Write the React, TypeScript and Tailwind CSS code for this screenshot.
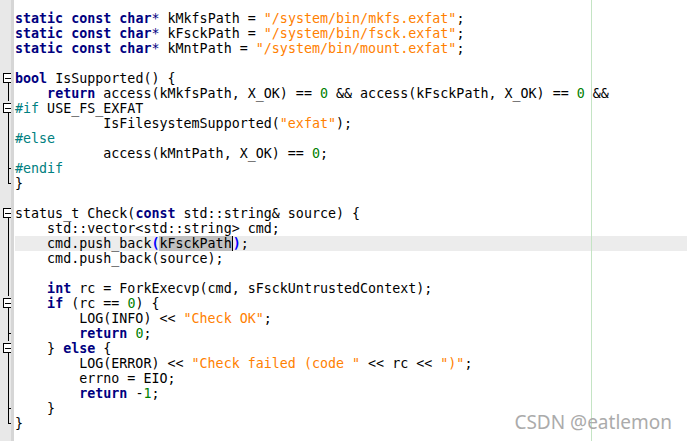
type Tok = [string, string?];
type Fold = "none" | "box" | "line" | "tick" | "end";

const K = "font-bold text-[#000080]";
const S = "text-[#ff8000]";
const N = "text-[#008000]";
const P = "text-[#008080]";
const O = "text-[#000080]";

const lines: { fold: Fold; toks: Tok[]; current?: boolean }[] = [
  { fold: "none", toks: [["static", K], [" "], ["const", K], [" "], ["char", K], ["*", O], [" kMkfsPath = "], ['"/system/bin/mkfs.exfat"', S], [";"]] },
  { fold: "none", toks: [["static", K], [" "], ["const", K], [" "], ["char", K], ["*", O], [" kFsckPath = "], ['"/system/bin/fsck.exfat"', S], [";"]] },
  { fold: "none", toks: [["static", K], [" "], ["const", K], [" "], ["char", K], ["*", O], [" kMntPath = "], ['"/system/bin/mount.exfat"', S], [";"]] },
  { fold: "none", toks: [] },
  { fold: "box", toks: [["bool", K], [" IsSupported() {"]] },
  { fold: "line", toks: [["    "], ["return", K], [" access(kMkfsPath, X_OK) == "], ["0", N], [" && access(kFsckPath, X_OK) == "], ["0", N], [" &&"]] },
  { fold: "box", toks: [["#if", P], [" USE_FS_EXFAT"]] },
  { fold: "line", toks: [["           IsFilesystemSupported("], ['"exfat"', S], [");"]] },
  { fold: "line", toks: [["#else", P]] },
  { fold: "line", toks: [["           access(kMntPath, X_OK) == "], ["0", N], [";"]] },
  { fold: "tick", toks: [["#endif", P]] },
  { fold: "end", toks: [["}"]] },
  { fold: "none", toks: [] },
  { fold: "box", toks: [["status_t Check("], ["const", K], [" std::string& source) {"]] },
  { fold: "line", toks: [["    std::vector<std::string> cmd;"]] },
  { fold: "line", toks: [], current: true },
  { fold: "line", toks: [["    cmd.push_back(source);"]] },
  { fold: "line", toks: [] },
  { fold: "line", toks: [["    "], ["int", K], [" rc = ForkExecvp(cmd, sFsckUntrustedContext);"]] },
  { fold: "box", toks: [["    "], ["if", K], [" (rc == "], ["0", N], [") {"]] },
  { fold: "line", toks: [["        LOG(INFO) << "], ['"Check OK"', S], [";"]] },
  { fold: "tick", toks: [["        "], ["return", K], [" "], ["0", N], [";"]] },
  { fold: "box", toks: [["    } "], ["else", K], [" {"]] },
  { fold: "line", toks: [["        LOG(ERROR) << "], ['"Check failed (code "', S], [" << rc << "], ['")"', S], [";"]] },
  { fold: "line", toks: [["        errno = EIO;"]] },
  { fold: "line", toks: [["        "], ["return", K], [" -"], ["1", N], [";"]] },
  { fold: "tick", toks: [["    }"]] },
  { fold: "end", toks: [["}"]] },
  { fold: "none", toks: [] },
];

// fold margin cell, one per text line (15px high)
function FoldMark({ fold }: { fold: Fold }) {
  if (fold === "none") return <div className="h-[15px]" />;
  if (fold === "box")
    return (
      <div className="flex h-[15px] flex-col items-start pl-[3px] pt-[2px]">
        <div className="flex h-[10px] w-[10px] items-center justify-center border border-black bg-white">
          <div className="h-px w-[6px] bg-black" />
        </div>
        <div className="ml-[5px] w-px flex-1 bg-black" />
      </div>
    );
  if (fold === "line")
    return (
      <div className="flex h-[15px] pl-[8px]">
        <div className="w-px bg-black" />
      </div>
    );
  return (
    <div className="flex h-[15px] pl-[8px]">
      <div className={`w-px bg-black ${fold === "end" ? "h-[8px]" : "h-full"}`} />
      <div className="mt-[7px] h-px w-[5px] bg-black" />
    </div>
  );
}

function CurrentLine() {
  return (
    <>
      {"    cmd.push_back"}
      <span className="font-bold text-[#0000ff]">(</span>
      <span className="border-r border-black bg-[#c0c0c0]">kFsckPath</span>
      <span className="font-bold text-[#0000ff]">)</span>
      {";"}
    </>
  );
}

export default function App() {
  return (
    <div className="relative flex h-[441px] w-[687px] overflow-hidden bg-white">
      <div className="flex w-[14px] shrink-0 bg-[#e8e8e8] pr-0">
        <div className="w-[11px] pt-[11px]">
          <div className="w-[14px]">
            {lines.map((l, i) => (
              <FoldMark key={i} fold={l.fold} />
            ))}
          </div>
        </div>
        <div className="w-[3px] bg-[#d6d6d6]" />
      </div>
      <div className="flex-1 pl-px pt-[11px] font-['DejaVu_Sans_Mono','Liberation_Mono',monospace] text-[13.33px] leading-[15px] text-black">
        {lines.map((l, i) => (
          <div key={i} className={`h-[15px] whitespace-pre ${l.current ? "bg-[#ececec]" : ""}`}>
            {l.current ? (
              <CurrentLine />
            ) : (
              l.toks.map((t, j) => (
                <span key={j} className={t[1] ?? ""}>
                  {t[0]}
                </span>
              ))
            )}
          </div>
        ))}
      </div>
      {/* edge column marker */}
      <div className="absolute left-[591px] top-0 h-full w-px bg-[#c4e4c4]" />
      <div className="absolute bottom-[5px] right-[15px] font-['Noto_Sans',sans-serif] text-[19px] text-[#ababab]">
        CSDN @eatlemon
      </div>
    </div>
  );
}
